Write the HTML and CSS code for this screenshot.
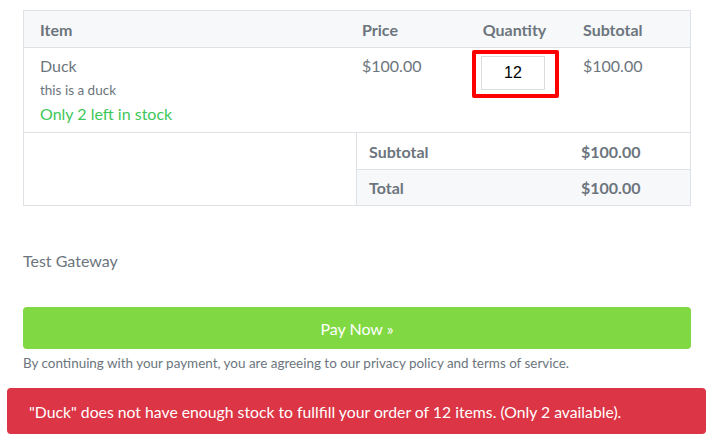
FILE: index.html
```html
<!DOCTYPE html>
<html>
<head>
<meta charset="utf-8">
<link rel="stylesheet" href="styles.css">
</head>
<body>
<div class="page">
  <div class="cart">
    <div class="row head">
      <div class="c item">Item</div>
      <div class="c price">Price</div>
      <div class="c qty">Quantity</div>
      <div class="c sub">Subtotal</div>
    </div>
    <div class="row line">
      <div class="c item">
        <div class="name">Duck</div>
        <div class="desc">this is a duck</div>
        <div class="stock">Only 2 left in stock</div>
      </div>
      <div class="c price">$100.00</div>
      <div class="c qty">
        <div class="hl"><input class="qinput" type="text" value="12"></div>
      </div>
      <div class="c sub">$100.00</div>
    </div>
    <div class="summary">
      <div class="blank"></div>
      <div class="totals">
        <div class="trow">
          <div class="tl">Subtotal</div>
          <div class="tv">$100.00</div>
        </div>
        <div class="trow alt">
          <div class="tl">Total</div>
          <div class="tv">$100.00</div>
        </div>
      </div>
    </div>
  </div>
  <div class="gateway">Test Gateway</div>
  <button class="pay">Pay Now »</button>
  <p class="terms">By continuing with your payment, you are agreeing to our privacy policy and terms of service.</p>
</div>
<div class="alert">"Duck" does not have enough stock to fullfill your order of 12 items. (Only 2 available).</div>
</body>
</html>
```
FILE: styles.css
```css
* { box-sizing: border-box; }
body {
  margin: 0;
  font-family: Lato, "Open Sans", sans-serif;
  color: #6c757d;
  background: #fff;
}
.page { padding: 10px 23px 0 23px; }
.cart { border: 1px solid #dee2e6; }
.row { display: grid; grid-template-columns: 321px 118px 103px 1fr; }
.head { background: #f7f8fa; border-bottom: 1px solid #dee2e6; height: 37px; align-items: center; }
.head .c { font-weight: 700; font-size: 16px; padding-left: 16px; }
.head .price { padding-left: 17px; }
.head .sub { padding-left: 17px; }
.head .qty { padding-left: 0; text-align: center; }
.line { height: 84px; font-size: 16px; }
.line .c { padding: 8px 0 0 16px; }
.line .price { padding-left: 17px; }
.line .sub { padding-left: 17px; }
.name { line-height: 20px; }
.desc { font-size: 13.5px; line-height: 20px; margin-top: 4px; }
.stock { color: #3ec75a; line-height: 20px; margin-top: 4px; }
.line .price { line-height: 20px; }
.line .sub { line-height: 20px; }
.line .qty { padding: 2px 0 0 9px; }
.hl { display: inline-block; border: 4px solid #ff0000; border-radius: 2px; padding: 2px 10px 4px 5px; }
.qinput {
  display: block; width: 64px; height: 34px;
  border: 1px solid #dcdcdc; text-align: center;
  font-family: "Liberation Sans", Arial, sans-serif; font-size: 16px; color: #000;
  padding: 0;
}
.summary { display: grid; grid-template-columns: 333px 1fr; border-top: 1px solid #dee2e6; }
.blank { border-right: 1px solid #dee2e6; }
.trow { display: grid; grid-template-columns: 212px 1fr; height: 36px; align-items: center; font-size: 16px; font-weight: 700; }
.trow.alt { background: #f7f8fa; border-top: 1px solid #dee2e6; height: 36px; }
.tl { padding-left: 12px; }
.tv { padding-left: 12px; }
.gateway { margin-top: 45px; font-size: 16px; line-height: 20px; }
.pay {
  display: block; width: 100%; margin-top: 36px; height: 42px;
  background: #80d943; border: none; border-radius: 4px; color: #fff;
  font-family: Lato, sans-serif; font-size: 16px;
}
.terms { margin: 5px 0 0 0; font-size: 13.45px; line-height: 18px; }
.alert {
  margin: 16px 8px 0 7px; height: 46px; padding: 0 0 0 22px;
  background: #dc3545; color: #fff; border-radius: 4px;
  font-size: 15.75px; display: flex; align-items: center;
}
```
